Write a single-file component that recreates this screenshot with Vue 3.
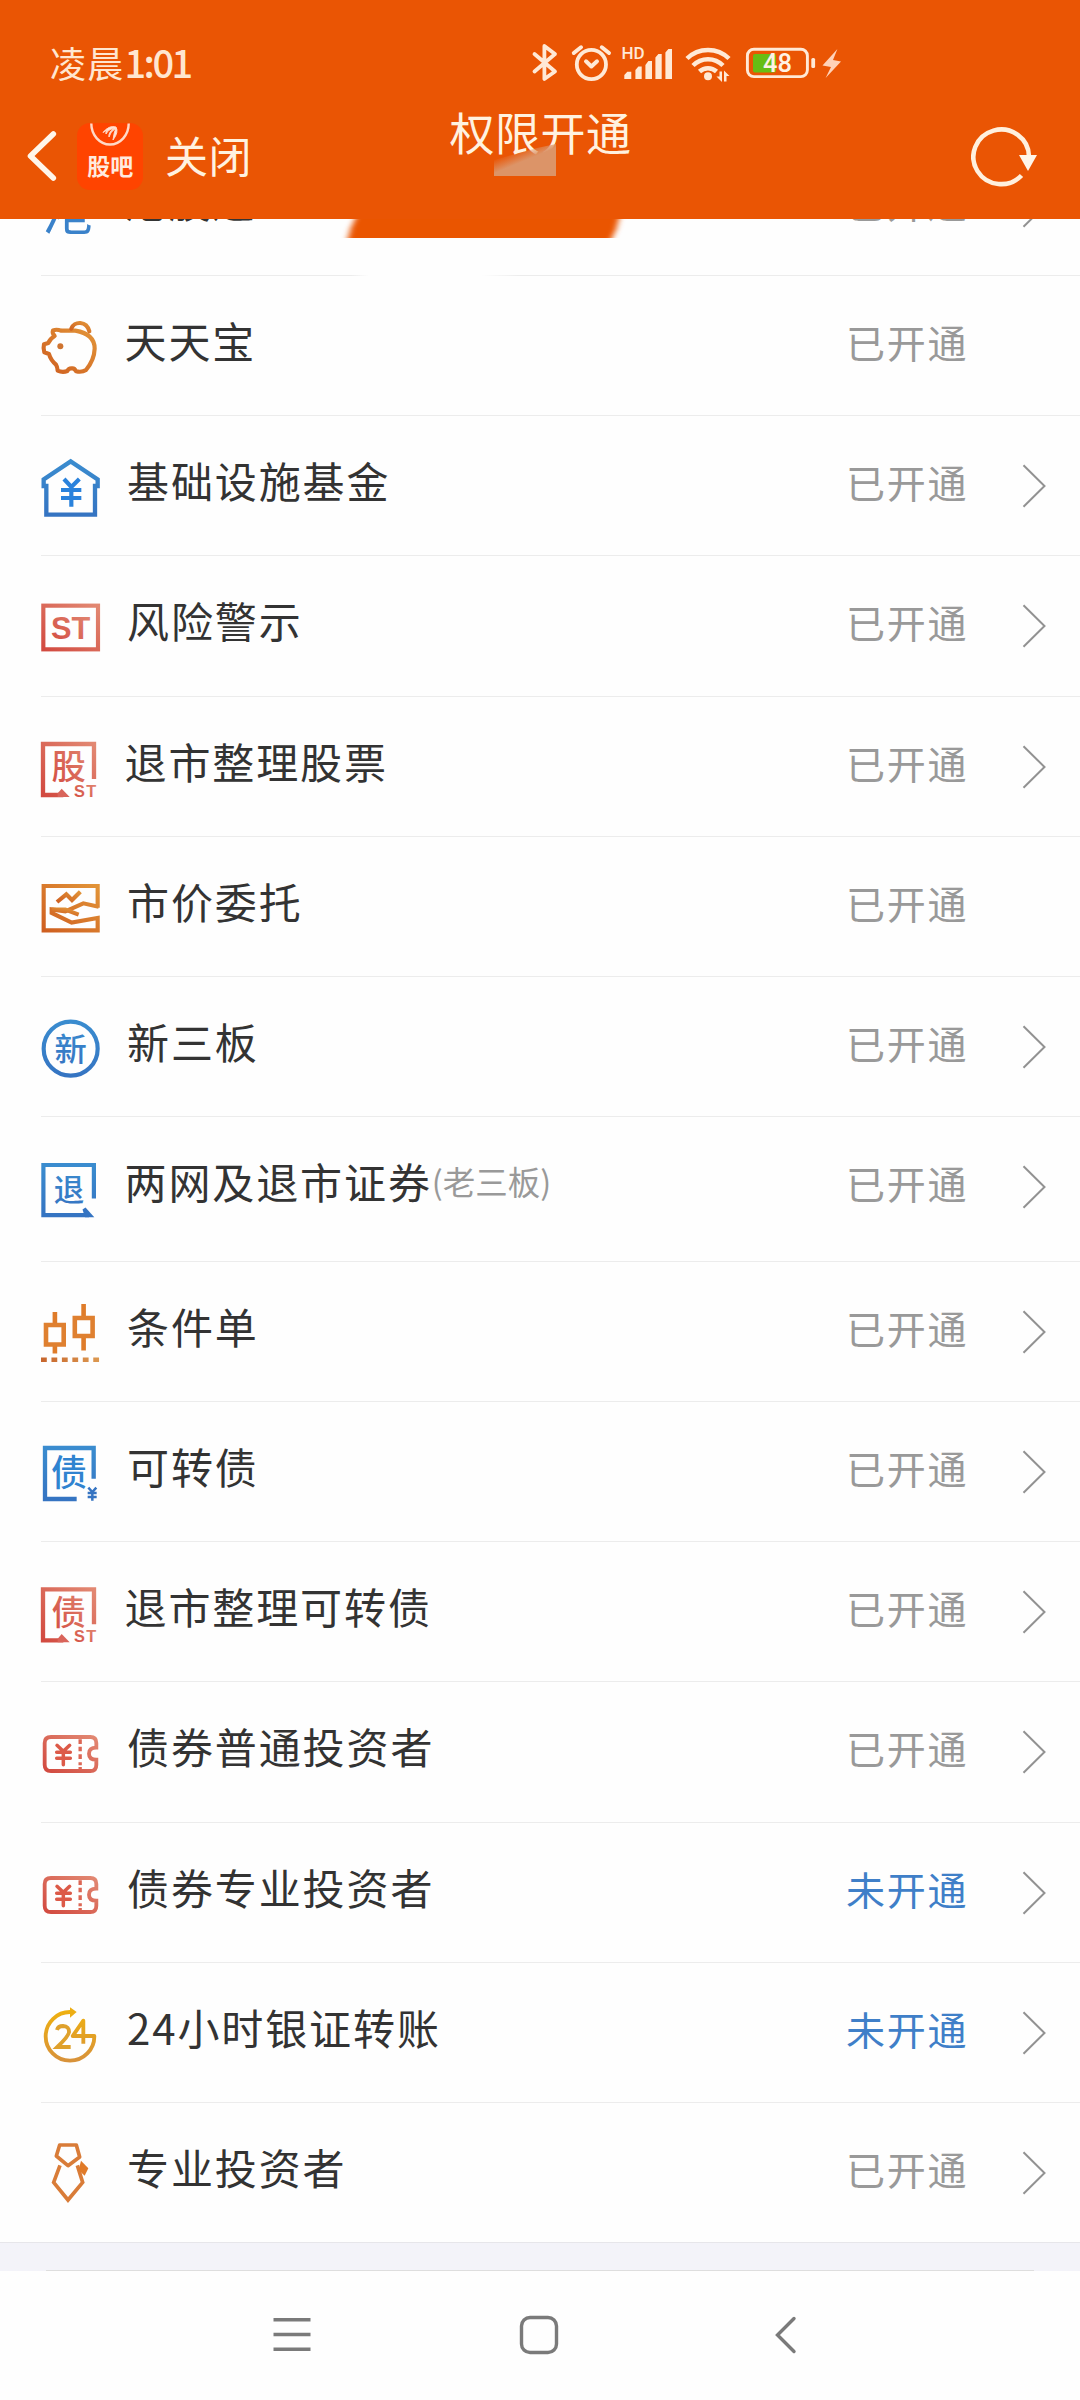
<script setup>
const rows = [
  { icon: 'hk', label: '港股通', open: true, more: true, h: 140, tight: true },
  { icon: 'pig', label: '天天宝', open: true, more: false, h: 140, tight: true },
  { icon: 'house', label: '基础设施基金', open: true, more: true, h: 140 },
  { icon: 'st', label: '风险警示', open: true, more: true, h: 141 },
  { icon: 'stock', label: '退市整理股票', open: true, more: true, h: 140, tight: true },
  { icon: 'hand', label: '市价委托', open: true, more: false, h: 140 },
  { icon: 'xin', label: '新三板', open: true, more: true, h: 140 },
  { icon: 'tui', label: '两网及退市证券', note: '(老三板)', open: true, more: true, h: 145, tight: true },
  { icon: 'candle', label: '条件单', open: true, more: true, h: 140 },
  { icon: 'bond', label: '可转债', open: true, more: true, h: 140 },
  { icon: 'bondst', label: '退市整理可转债', open: true, more: true, h: 140, tight: true },
  { icon: 'ticket', label: '债券普通投资者', open: true, more: true, h: 141 },
  { icon: 'ticket', label: '债券专业投资者', open: false, more: true, h: 140 },
  { icon: 'clock', label: '24小时银证转账', open: false, more: true, h: 140 },
  { icon: 'tie', label: '专业投资者', open: true, more: true, h: 140 },
]
</script>

<template>
  <div class="screen">
    <header class="header">
      <div class="statusbar">
        <div class="time">凌晨<span>1:01</span></div>
        <svg class="sys" width="325" height="50" viewBox="525 40 325 50" fill="none" stroke="#ffe9d6">
          <defs>
            <linearGradient id="gOrange" x1="0" y1="1" x2="1" y2="0"><stop offset="0" stop-color="#cf5f20" /><stop offset="1" stop-color="#e29438" /></linearGradient>
            <linearGradient id="gBlue" x1="0" y1="1" x2="0" y2="0"><stop offset="0" stop-color="#3574c2" /><stop offset="1" stop-color="#3a8ccf" /></linearGradient>
            <linearGradient id="gRed" x1="0" y1="1" x2="1" y2="0"><stop offset="0" stop-color="#d24a40" /><stop offset="1" stop-color="#e28872" /></linearGradient>
            <linearGradient id="gGold" x1="0" y1="1" x2="0" y2="0"><stop offset="0" stop-color="#d8923a" /><stop offset="1" stop-color="#eeb010" /></linearGradient>
          </defs>
          <path d="M534.500 55L555 72.500L544.400 80V47L555 55L534.500 72.500" stroke-width="3.800" stroke-linejoin="round" stroke-linecap="round" />
          <circle cx="591.400" cy="65.500" r="14.600" stroke-width="3.800" />
          <path d="M586 62.300L591.400 67.500L597 62.300M573.800 54L581 48.300M609 54L601.800 48.300" stroke-width="4" stroke-linecap="round" stroke-linejoin="round" />
          <g fill="#ffe9d6" stroke="none">
            <text x="621.500" y="60" font-size="17" class="hd">HD</text>
            <path d="M624.300 76l3-3.300h4V80h-7zM635.400 71l3-3.600h3.300V80h-6.300zM645.400 66l3-4h3.600v18h-6.600zM655.400 58.500l3-3.500h3.300V80h-6.300zM665.400 53.500l3-3.500h3.600V80h-6.600z" />
            <circle cx="708" cy="77.300" r="4" />
            <path d="M716.500 77.500h3v-5h2.500v10.500zM724 71.500l5.500 5.500h-3v5.500H724z" />
            <rect x="811.300" y="59" width="3.800" height="10" rx="1.500" />
          </g>
          <path d="M687 59.500a30 30 0 0 1 42 0M693 66.500a21 21 0 0 1 30 0M699.500 72.500a12.500 12.500 0 0 1 17 0" stroke-width="4.500" />
          <rect x="747.400" y="50.200" width="60" height="27.400" rx="6.500" stroke-width="2.900" />
          <rect x="753" y="55" width="23" height="18.500" rx="2" fill="#67bd14" stroke="none" />
          <text x="763" y="73.300" font-size="25.500" fill="#fff1e4" stroke="none" class="bat">48</text>
          <path d="M837.400 50L822.500 66.500L831 68L825.600 79L841 62.500L833 61Z" fill="#ffd2b8" stroke="none" />
        </svg>
      </div>
      <div class="navbar">
        <svg class="back" width="32" height="54" viewBox="26 129.500 32 54"><path d="M53.300 134.500L30.500 156.500L53.300 178.500" fill="none" stroke="#fff6ea" stroke-width="5.600" stroke-linecap="round" stroke-linejoin="round" /></svg>
        <svg class="app" width="66" height="67" viewBox="0 0 66 67">
          <rect width="66" height="67" rx="13" fill="#ff4400" />
          <path d="M14.300 0.500a18.700 21 0 0 0 37.400 0" fill="none" stroke="#ffd9c8" stroke-width="2.400" />
          <path d="M26 9.500Q32 2 39 4Q42 9 36 17Q37 9 39 5Q33 9 32 14Q31 10 37 5Q30 7 29 11Q28 9 31 7Q28 8 26 9.500Z" fill="#ffe6da" stroke="#ffd9c8" stroke-width="1" />
          <text x="33.200" y="52.300" text-anchor="middle" class="ic" font-size="23" font-weight="700" fill="#ffeadf">股吧</text>
        </svg>
        <span class="close">关闭</span>
        <span class="title">权限开通</span>
        <svg class="reload" width="66" height="66" viewBox="970 124 66 66">
          <path d="M1028 155.500A27.800 27.300 0 1 0 1020.500 174.500" fill="none" stroke="#fff0de" stroke-width="4.600" />
          <path d="M1018 154h18l-9 16z" fill="#fff6ea" />
        </svg>
      </div>
      <svg class="smudge" width="62" height="32" viewBox="0 0 62 32">
        <defs><linearGradient id="fade" gradientUnits="userSpaceOnUse" x1="20" y1="7" x2="25" y2="19"><stop offset="0" stop-color="#dc9468" stop-opacity="0" /><stop offset="1" stop-color="#dc9468" /></linearGradient></defs>
        <path d="M0 16L43 4L62 0V32H0Z" fill="url(#fade)" />
      </svg>
      <svg class="tab" width="300" height="19" viewBox="335 219 300 19">
        <defs><filter id="soft" x="-10%" y="-50%" width="120%" height="200%"><feGaussianBlur stdDeviation="3 0" /></filter></defs>
        <path d="M359 210L355 219Q350 228 348 238L346 246H606L612 238Q617 229 619 219L621 210Z" fill="#ea5504" filter="url(#soft)" />
      </svg>
    </header>

    <main class="list">
      <div v-for="(r, i) in rows" :key="i" class="row" :style="{ height: r.h + 'px' }">
        <svg class="icon" width="72" height="140" viewBox="36 0 72 140" fill="none">
          <text v-if="r.icon === 'hk'" x="69" y="93.500" text-anchor="middle" class="ic" font-size="53" font-weight="400" fill="#3a82ca">港</text>

          <g v-else-if="r.icon === 'pig'" transform="translate(0 14) scale(.33333)" stroke="url(#gOrange)" stroke-width="12.500" stroke-linejoin="round" stroke-linecap="round">
            <path d="M159 121Q170 117 184 122H226Q284 132 284 176Q283 210 258 240Q246 248 228 244Q224 234 216 235Q206 234 202 243Q188 249 173 242Q172 230 168 224Q152 210 147 192L133 187Q129 175 132 163L145 159Q150 146 164 138Q156 130 159 121Z" />
            <path d="M214 116C222 92 260 92 268 124" />
            <circle cx="181" cy="169" r="9" fill="#cf7430" stroke="none" />
          </g>

          <g v-else-if="r.icon === 'house'" transform="translate(0 -126) scale(.33333)">
            <path d="M139 674V588H131V568L212 514L293 568V588H285V674Z" stroke="url(#gBlue)" stroke-width="13" />
            <path d="M192 567L214 591L238 567M214 591V650M183 600H244M183 624H244" stroke="#2a82dc" stroke-width="12.500" />
          </g>

          <g v-else-if="r.icon === 'st'" transform="translate(0 -266) scale(.33333)">
            <rect x="130" y="947" width="164" height="131" stroke="url(#gRed)" stroke-width="12.500" />
            <text x="212" y="1047" text-anchor="middle" class="lat" font-size="94" textLength="118" lengthAdjust="spacingAndGlyphs" fill="url(#gRed)">ST</text>
          </g>

          <g v-else-if="r.icon === 'stock' || r.icon === 'bondst'" :transform="r.icon === 'stock' ? 'translate(0 -27) scale(.33333)' : 'translate(0 -26.700) scale(.33333)'">
            <path d="M282 327V222H129V375H190" stroke="url(#gRed)" stroke-width="13" />
            <path d="M173 370L185 356L209 381H173Z" fill="#d9645a" />
            <text x="206" y="328" text-anchor="middle" class="ic" font-size="103" font-weight="500" fill="url(#gRed)">{{ r.icon === 'stock' ? '股' : '债' }}</text>
            <text x="222" y="380" class="lat" font-size="49" textLength="67" fill="url(#gRed)">ST</text>
          </g>

          <g v-else-if="r.icon === 'hand'" transform="translate(0 -167) scale(.33333)" stroke="url(#gOrange)" stroke-width="12.500">
            <path d="M293 713V648H131V781H293V744L215 758L155 729V718L196 724L250 700L296 710" />
            <path d="M155 719H196L236 734" />
            <path d="M171 696L199 673L216 690L241 665" />
          </g>

          <g v-else-if="r.icon === 'xin'" transform="translate(0 -307) scale(.33333)">
            <circle cx="212" cy="1136" r="81" stroke="url(#gBlue)" stroke-width="12.500" />
            <text x="212" y="1172" text-anchor="middle" class="ic" font-size="97" font-weight="500" fill="url(#gBlue)">新</text>
          </g>

          <g v-else-if="r.icon === 'tui'">
            <path d="M93.900 81.500V48H43.400V98.200H89" stroke="url(#gBlue)" stroke-width="4.200" />
            <path d="M82.500 92.500L85.500 90.500L94.300 100.200H85Z" fill="#3574c2" />
            <text x="69" y="83.500" text-anchor="middle" class="ic" font-size="30.500" font-weight="500" fill="url(#gBlue)">退</text>
          </g>

          <g v-else-if="r.icon === 'candle'">
            <path d="M54.900 50V62M54.900 84V91.500M83.600 42V55M83.600 75.500V88.500" stroke="#df7c2a" stroke-width="4.600" />
            <path d="M46 63H63.700V82.500H46ZM74.800 56H92.600V74H74.800Z" stroke="#df8030" stroke-width="4.600" />
            <path d="M41 97.700H99.200" stroke="url(#gDots)" stroke-width="4.600" stroke-dasharray="5.800 4.650" />
            <defs><linearGradient id="gDots" gradientUnits="userSpaceOnUse" x1="41" y1="0" x2="99" y2="0"><stop offset="0" stop-color="#c7662d" /><stop offset="1" stop-color="#dc9850" /></linearGradient></defs>
          </g>

          <g v-else-if="r.icon === 'bond'" transform="translate(0 -12) scale(.33333)">
            <path d="M281 266V174H135V327H230" stroke="url(#gBlue)" stroke-width="13" />
            <text x="207" y="289" text-anchor="middle" class="ic" font-size="108" font-weight="500" fill="#2f83d0">债</text>
            <path d="M265 293L277 306L289 293M277 306V332M263 309H290M263 321H290" stroke="#3574c2" stroke-width="7.500" />
          </g>

          <g v-else-if="r.icon === 'ticket'" transform="translate(0 -13) scale(.33333)" stroke="url(#gRed)" stroke-width="11.500">
            <path d="M289 236V222Q289 204 271 204H153Q134 204 134 222V287Q134 306 153 306H271Q289 306 289 287V272Q267 272 267 254Q267 236 289 236Z" stroke-dasharray="400 36 400" class="outline" />
            <path d="M171 229L190 247L209 229M190 247V287M170 250H211M170 268H211" stroke="#dc5a48" stroke-width="10.500" stroke-linecap="round" />
            <path d="M235.500 211h10v14h-10zM235.500 233h10v14h-10zM235.500 256h10v14h-10zM235.500 280h10v9h-10zM235.500 294h10v8h-10z" fill="#dc6654" stroke="none" />
          </g>

          <g v-else-if="r.icon === 'clock'" transform="translate(0 -153) scale(.33333)">
            <path d="M212 606A73 73 0 1 0 283 678H218L250 632V701" stroke="url(#gGold)" stroke-width="11.500" stroke-linejoin="round" />
            <path d="M210 592L230 606L210 623Z" fill="#edae14" />
            <path d="M171 660Q174 648 189 648Q208 649 207 667Q205 680 172 711H212" stroke="#dfa12c" stroke-width="11.500" />
          </g>

          <g v-else-if="r.icon === 'tie'" transform="translate(0 -293) scale(.33333)" stroke="#d97c38" stroke-width="11">
            <path d="M179 1005H229L239 1041L204 1067L169 1038Z" stroke-linejoin="round" />
            <path d="M180 1066L161 1117L204 1170L248 1117L232 1066" />
            <path d="M243 1052L265 1075L254 1097L236 1080Z" fill="#e07a28" stroke="none" />
          </g>
        </svg>
        <div class="label" :class="{ tight: r.tight }">{{ r.label }}<span v-if="r.note" class="note">{{ r.note }}</span></div>
        <div class="state" :class="{ off: !r.open }">{{ r.open ? '已开通' : '未开通' }}</div>
        <svg class="chev" width="28" height="46" viewBox="0 0 28 46"><path v-if="r.more" d="M2.500 2.200L23.500 23L2.500 43.800" fill="none" stroke="#929292" stroke-width="2" /></svg>
      </div>
    </main>

    <div class="gap"></div>
    <footer class="sysnav">
      <svg width="40" height="40" viewBox="0 0 40 40"><path d="M1.500 4.700h37M1.500 19.500h37M1.500 34.300h37" stroke="#7a7a7a" stroke-width="3.400" /></svg>
      <svg width="40" height="40" viewBox="0 0 40 40"><rect x="2.500" y="2.500" width="35" height="35" rx="8.500" fill="none" stroke="#7a7a7a" stroke-width="3.400" /></svg>
      <svg width="40" height="40" viewBox="0 0 40 40"><path d="M28 3.500L11.500 20L28 36.500" fill="none" stroke="#7a7a7a" stroke-width="3.400" stroke-linecap="round" /></svg>
    </footer>
  </div>
</template>

<style>
body { margin: 0; background: #fefefe; }
</style>

<style scoped>
.screen {
  width: 1080px;
  height: 2400px;
  display: flex;
  flex-direction: column;
  overflow: hidden;
  background: #fefefe;
  font-family: "Noto Sans CJK SC", sans-serif;
}
.header {
  position: relative;
  flex: none;
  height: 219px;
  z-index: 2;
  background: #ea5504;
  color: #fff2e0;
}
.statusbar {
  display: flex;
  align-items: center;
  height: 88px;
  padding: 40px 230px 0 50px;
  box-sizing: border-box;
  justify-content: space-between;
}
.time {
  margin-top: -4px;
  font-size: 36px;
  line-height: 48px;
  letter-spacing: 1.200px;
  color: #ffe6d0;
}
.time span { font-size: 38px; letter-spacing: -2.500px; font-weight: 500; }
.sys { flex: none; width: 325px; }
.navbar {
  position: relative;
  display: flex;
  align-items: center;
  height: 136px;
  padding: 0 43px 0 26px;
}
.back { flex: none; }
.app { flex: none; margin-left: 19px; margin-top: 1px; }
.close {
  margin: -5px 0 0 22px;
  font-size: 43px;
  line-height: 60px;
  letter-spacing: .5px;
}
.title {
  position: absolute;
  left: 1px;
  right: 0;
  top: 14px;
  text-align: center;
  font-size: 45px;
  line-height: 60px;
  letter-spacing: .5px;
}
.reload { margin-left: auto; margin-top: 3px; }
.smudge { position: absolute; left: 494px; top: 144px; }
.tab {
  position: absolute;
  left: 335px;
  top: 219px;
}
.list {
  flex: none;
  height: 2024px;
  overflow: hidden;
  display: flex;
  flex-direction: column;
}
.row {
  flex: none;
  display: flex;
  align-items: flex-start;
  box-sizing: border-box;
  padding-left: 36px;
  background: linear-gradient(#ececec, #ececec) 100% 100% / 1039px 1px no-repeat;
}
.row:first-child {
  margin-top: -83px;
  background: linear-gradient(90deg, #ececec 310px, transparent 328px, transparent 440px, #ececec 480px) 100% 100% / 1039px 1px no-repeat;
}
.row:last-child {
  background: linear-gradient(#e6e6ea, #e6e6ea) 0 100% / 100% 1px no-repeat;
}
.icon { flex: none; }
.label {
  flex: 1;
  padding: 34px 0 0 19px;
  font-size: 42px;
  line-height: 60px;
  letter-spacing: 1.900px;
  color: #333;
  white-space: nowrap;
}
.label.tight { padding-left: 16.500px; }
.note {
  font-size: 32.500px;
  letter-spacing: 0;
  color: #999;
  vertical-align: 4px;
  line-height: 1;
}
.state {
  width: 175px;
  padding-top: 35px;
  font-size: 39px;
  line-height: 60px;
  letter-spacing: 1.800px;
  color: #999;
  white-space: nowrap;
}
.state.off { color: #3f7fc8; }
.chev { flex: none; margin: 47px 31px 0 0; }
.gap {
  flex: none;
  height: 28px;
  background: linear-gradient(#dedede, #dedede) 46px 100% / 988px 1px no-repeat, #f3f3f9;
}
.sysnav {
  flex: 1;
  display: flex;
  gap: 207px;
  padding: 44px 0 0 272px;
  background: #fefefe;
}
.outline { stroke-dasharray: none; }
.ic { font-family: "Noto Sans CJK SC", sans-serif; }
.lat { font-family: "Liberation Sans", sans-serif; font-weight: 700; }
.hd { font-family: Roboto, sans-serif; font-weight: 500; }
.bat { font-family: Roboto, sans-serif; font-weight: 500; }
</style>
